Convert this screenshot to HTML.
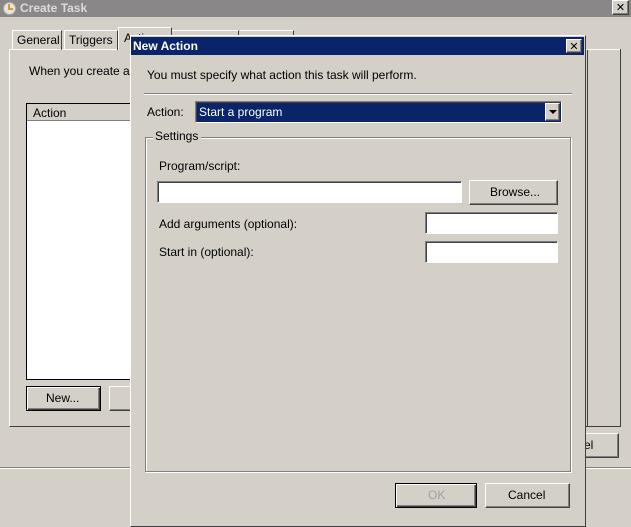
<!DOCTYPE html>
<html><head><style>
*{box-sizing:border-box;margin:0;padding:0}
body{width:631px;height:527px;overflow:hidden;background:#d4d0c8;font-family:"Liberation Sans","DejaVu Sans",sans-serif;font-size:12px;color:#000;position:relative}
.a{position:absolute}
.t{position:absolute;white-space:nowrap}
.raised{border:1px solid;border-color:#fff #404040 #404040 #fff;box-shadow:inset -1px -1px 0 #808080;background:#d4d0c8}
.btnb{border:1px solid #000;box-shadow:inset 1px 1px 0 #fff,inset -1px -1px 0 #404040,inset -2px -2px 0 #808080;background:#d4d0c8}
.sunk{border:1px solid;border-color:#808080 #fff #fff #808080;box-shadow:inset 1px 1px 0 #404040;background:#fff}
.etch{border:1px solid #808080;box-shadow:1px 1px 0 #fff,inset 1px 1px 0 #fff}
.cx{text-align:center;line-height:14px;font-weight:bold;font-size:11px}
</style></head><body>
<div class="a" style="left:0;top:0;width:631px;height:17px;background:#898787"></div>
<div class="a" style="left:3px;top:2px;width:13px;height:13px;border-radius:50%;background:#e8e4dc;border:1px solid #aaa"></div>
<div class="a" style="left:8px;top:4px;width:5px;height:6px;border-left:2px solid #c8a030;border-bottom:2px solid #c8a030"></div>
<div class="t" style="left:20px;top:1px;color:#dcdcdc;font-weight:bold;font-size:12px">Create Task</div>
<div class="a raised cx" style="left:612px;top:0;width:17px;height:15px">✕</div>

<div class="a" style="left:9px;top:49px;width:579px;height:378px;border:1px solid;border-color:#fff #404040 #404040 #fff"></div>
<div class="a" style="left:587px;top:49px;width:34px;height:1px;background:#fff"></div>
<div class="a" style="left:620px;top:49px;width:1px;height:378px;background:#404040"></div>
<div class="a" style="left:585px;top:426px;width:36px;height:1px;background:#404040"></div>
<div class="a" style="left:12px;top:30px;width:50px;height:20px;border:1px solid;border-bottom:none;border-color:#fff #404040 #fff #fff"></div>
<div class="t" style="left:17px;top:33px">General</div>
<div class="a" style="left:64px;top:30px;width:54px;height:20px;border:1px solid;border-bottom:none;border-color:#fff #404040 #fff #fff"></div>
<div class="t" style="left:69px;top:33px">Triggers</div>
<div class="a" style="left:118px;top:27px;width:54px;height:23px;border:1px solid;border-bottom:none;border-color:#fff #404040 #fff #fff;background:#d4d0c8"></div>
<div class="t" style="left:124px;top:31px">Actions</div>
<div class="a" style="left:172px;top:30px;width:67px;height:20px;border-top:1px solid #fff;border-right:1px solid #404040"></div>
<div class="a" style="left:240px;top:30px;width:54px;height:20px;border-top:1px solid #fff;border-right:1px solid #404040"></div>
<div class="t" style="left:29px;top:64px">When you create a</div>
<div class="a" style="left:26px;top:103px;width:110px;height:277px;background:#fff;border:1px solid #000;border-right:none"></div>
<div class="a" style="left:27px;top:104px;width:109px;height:17px;background:#d4d0c8;border-bottom:1px solid #808080"></div>
<div class="t" style="left:33px;top:106px">Action</div>
<div class="a btnb" style="left:26px;top:386px;width:75px;height:25px"></div>
<div class="t" style="left:46px;top:391px">New...</div>
<div class="a raised" style="left:109px;top:386px;width:40px;height:25px"></div>
<div class="a raised" style="left:560px;top:433px;width:59px;height:25px"></div>
<div class="t" style="left:584px;top:438px">el</div>
<div class="a" style="left:0;top:467px;width:631px;height:1px;background:#808080"></div>
<div class="a" style="left:0;top:468px;width:631px;height:1px;background:#fff"></div>

<div class="a" style="left:130px;top:35px;width:456px;height:492px;background:#d4d0c8;border:1px solid;border-color:#fff #404040 #404040 #fff"></div>
<div class="a" style="left:131px;top:37px;width:453px;height:18px;background:#0a246a"></div>
<div class="t" style="left:133px;top:39px;color:#fff;font-weight:bold;font-size:12px">New Action</div>
<div class="a raised cx" style="left:566px;top:39px;width:16px;height:14px">✕</div>
<div class="t" style="left:147px;top:68px">You must specify what action this task will perform.</div>
<div class="a" style="left:144px;top:93px;width:428px;height:1px;background:#808080"></div>
<div class="a" style="left:144px;top:94px;width:428px;height:1px;background:#fff"></div>
<div class="t" style="left:147px;top:105px">Action:</div>
<div class="a" style="left:195px;top:101px;width:367px;height:22px;border:1px solid;border-color:#808080 #fff #fff #808080;box-shadow:inset 1px 1px 0 #404040;background:#0a246a"></div>
<div class="t" style="left:199px;top:105px;color:#fff">Start a program</div>
<div class="a raised" style="left:545px;top:103px;width:15px;height:18px"></div>
<div class="a" style="left:549px;top:110px;width:0;height:0;border-left:4px solid transparent;border-right:4px solid transparent;border-top:4px solid #000"></div>

<div class="a etch" style="left:145px;top:137px;width:426px;height:335px"></div>
<div class="t" style="left:153px;top:129px;background:#d4d0c8;padding:0 3px 0 2px">Settings</div>
<div class="t" style="left:159px;top:159px">Program/script:</div>
<div class="a sunk" style="left:157px;top:181px;width:305px;height:22px"></div>
<div class="a raised" style="left:469px;top:180px;width:89px;height:25px"></div>
<div class="t" style="left:490px;top:185px">Browse...</div>
<div class="t" style="left:159px;top:217px">Add arguments (optional):</div>
<div class="a sunk" style="left:425px;top:212px;width:133px;height:22px"></div>
<div class="t" style="left:159px;top:245px">Start in (optional):</div>
<div class="a sunk" style="left:425px;top:241px;width:133px;height:22px"></div>

<div class="a btnb" style="left:395px;top:483px;width:82px;height:25px"></div>
<div class="t" style="left:428px;top:488px;color:#a0a0a0">OK</div>
<div class="a raised" style="left:485px;top:483px;width:85px;height:25px"></div>
<div class="t" style="left:508px;top:488px">Cancel</div>
</body></html>
